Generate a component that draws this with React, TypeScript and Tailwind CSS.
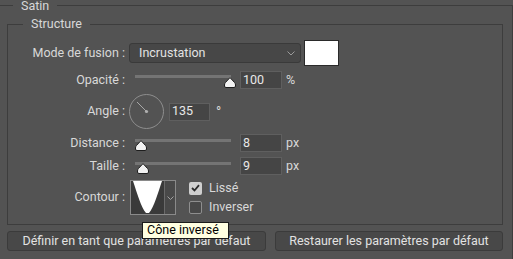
import React from "react";

const font = { fontFamily: "Roboto, 'Liberation Sans', sans-serif" };

function Thumb({ left }: { left: number }) {
  return (
    <svg
      width="12"
      height="11"
      viewBox="0 0 12 11"
      className="absolute top-[6px]"
      style={{ left }}
    >
      <path
        d="M6 0.6 L10.6 5.6 Q11.5 6.6 11.5 8 L11.5 9 Q11.5 10.5 10 10.5 L2 10.5 Q0.5 10.5 0.5 9 L0.5 8 Q0.5 6.6 1.4 5.6 Z"
        fill="#f2f2f2"
        stroke="#1e1e1e"
        strokeWidth="1"
      />
    </svg>
  );
}

function Slider({ thumb, trackTop }: { thumb: number; trackTop: string }) {
  return (
    <div className="relative ml-[10px] w-[105px] h-[18px]">
      <div className={`absolute left-0 w-[96px] h-[3px] bg-[#747474] ${trackTop}`} />
      <Thumb left={thumb} />
    </div>
  );
}

function NumInput({ value, w = "w-[42px]" }: { value: string; w?: string }) {
  return (
    <div
      className={`${w} h-[18px] bg-[#454545] border border-[#5f5f5f] flex items-center pl-[2px] text-[#e8e8e8] leading-none`}
    >
      {value}
    </div>
  );
}

function Label({ children }: { children: React.ReactNode }) {
  return <div className="w-[117px] shrink-0 text-right whitespace-nowrap">{children}</div>;
}

export default function App() {
  return (
    <div
      className="w-[513px] h-[259px] bg-[#535353] overflow-hidden relative text-[12.5px] text-[#d8d8d8]"
      style={font}
    >
      <div className="mt-[5px] -ml-px w-[514px] h-[300px] border border-[#3d3d3d] relative">
        <span className="absolute left-[13px] top-[-6px] px-[8px] bg-[#535353] leading-[12px]">
          Satin
        </span>

        <div className="ml-[7px] mt-[18px] w-[496px] h-[201px] border border-[#3d3d3d] relative">
          <span className="absolute left-[15px] top-[-8px] px-[8px] bg-[#535353] leading-[14px]">
            Structure
          </span>

          <div className="flex flex-col gap-[5px] pt-[15px]">
            {/* Mode de fusion */}
            <div className="flex items-center h-[26px]">
              <Label>Mode de fusion :</Label>
              <div className="ml-[4px] w-[172px] h-[20px] bg-[#474747] border border-[#3a3a3a] rounded-[3px] flex items-center justify-between pl-[9px] pr-[5px]">
                <span className="text-[#e2e2e2]">Incrustation</span>
                <svg width="8" height="5" viewBox="0 0 8 5">
                  <path d="M0.5 0.5 L4 4 L7.5 0.5" fill="none" stroke="#9a9a9a" strokeWidth="1" />
                </svg>
              </div>
              <div className="ml-[3px] w-[35px] h-[26px] bg-white border border-[#2a2a2a]" />
            </div>

            {/* Opacité */}
            <div className="flex items-center h-[18px]">
              <Label>Opacité :</Label>
              <Slider thumb={89} trackTop="top-[4px]" />
              <NumInput value="100" />
              <span className="ml-[4px]">%</span>
            </div>

            {/* Angle */}
            <div className="flex items-center h-[35px]">
              <Label>Angle :</Label>
              <svg width="35" height="35" viewBox="0 0 35 35" className="ml-[4px]">
                <circle cx="17.5" cy="17.5" r="17" fill="none" stroke="#8e8e8e" strokeWidth="1" />
                <line x1="17.5" y1="17.5" x2="8" y2="8" stroke="#a8a8a8" strokeWidth="1" />
                <circle cx="17.5" cy="17.5" r="1.6" fill="#b0b0b0" />
              </svg>
              <div className="ml-[5px]">
                <NumInput value="135" w="w-[41px]" />
              </div>
              <span className="ml-[6px] self-start mt-[8px] text-[14px]">°</span>
            </div>

            {/* Distance */}
            <div className="flex items-center h-[18px]">
              <Label>Distance :</Label>
              <Slider thumb={0} trackTop="top-[5px]" />
              <NumInput value="8" />
              <span className="ml-[4px]">px</span>
            </div>

            {/* Taille */}
            <div className="flex items-center h-[18px]">
              <Label>Taille :</Label>
              <Slider thumb={2} trackTop="top-[5px]" />
              <NumInput value="9" />
              <span className="ml-[4px]">px</span>
            </div>

            {/* Contour */}
            <div className="flex items-center h-[35px]">
              <Label>Contour :</Label>
              <div className="ml-[5px] w-[46px] h-[35px] border border-[#8a8a8a] flex">
                <svg width="33" height="33" viewBox="0 0 33 33" className="bg-[#3a3a3a]">
                  <path
                    d="M2 0 C6 12 10 26 15 32 L18 32 C23 26 27 12 31 0 Z"
                    fill="#ffffff"
                  />
                </svg>
                <div className="flex-1 border-l border-[#6a6a6a] bg-[#494949] flex items-center justify-center">
                  <svg width="7" height="4" viewBox="0 0 7 4">
                    <path d="M0.5 0.5 L3.5 3.5 L6.5 0.5" fill="none" stroke="#a0a0a0" strokeWidth="1" />
                  </svg>
                </div>
              </div>
              <div className="ml-[13px] flex flex-col gap-[3px]">
                <div className="flex items-center h-[16px]">
                  <div className="w-[13px] h-[13px] rounded-[2px] bg-[#cfcfcf] flex items-center justify-center">
                    <svg width="9" height="8" viewBox="0 0 9 8">
                      <path d="M1 4 L3.5 6.5 L8 1.2" fill="none" stroke="#2a2a2a" strokeWidth="1.8" />
                    </svg>
                  </div>
                  <span className="ml-[7px]">Lissé</span>
                </div>
                <div className="flex items-center h-[16px]">
                  <div className="w-[13px] h-[13px] rounded-[2px] bg-[#484848] border border-[#8e8e8e]" />
                  <span className="ml-[7px]">Inverser</span>
                </div>
              </div>
            </div>
          </div>
        </div>

        {/* Buttons */}
        <div className="mt-[6px] ml-[7px] flex gap-[9px]">
          <div className="w-[259px] h-[20px] bg-[#484848] border border-[#3b3b3b] rounded-[3px] flex items-center justify-center text-[#e2e2e2] whitespace-nowrap">
            Définir en tant que paramètres par défaut
          </div>
          <div className="w-[228px] h-[20px] bg-[#484848] border border-[#3b3b3b] rounded-[3px] flex items-center justify-center text-[#e2e2e2] whitespace-nowrap">
            Restaurer les paramètres par défaut
          </div>
        </div>
      </div>

      {/* Tooltip */}
      <div className="absolute left-[142px] top-[222px] w-[87px] h-[17px] bg-[#ffffe1] border border-[#1a1a1a] text-black flex items-center pl-[4px] whitespace-nowrap leading-none">
        Cône inversé
      </div>
    </div>
  );
}
